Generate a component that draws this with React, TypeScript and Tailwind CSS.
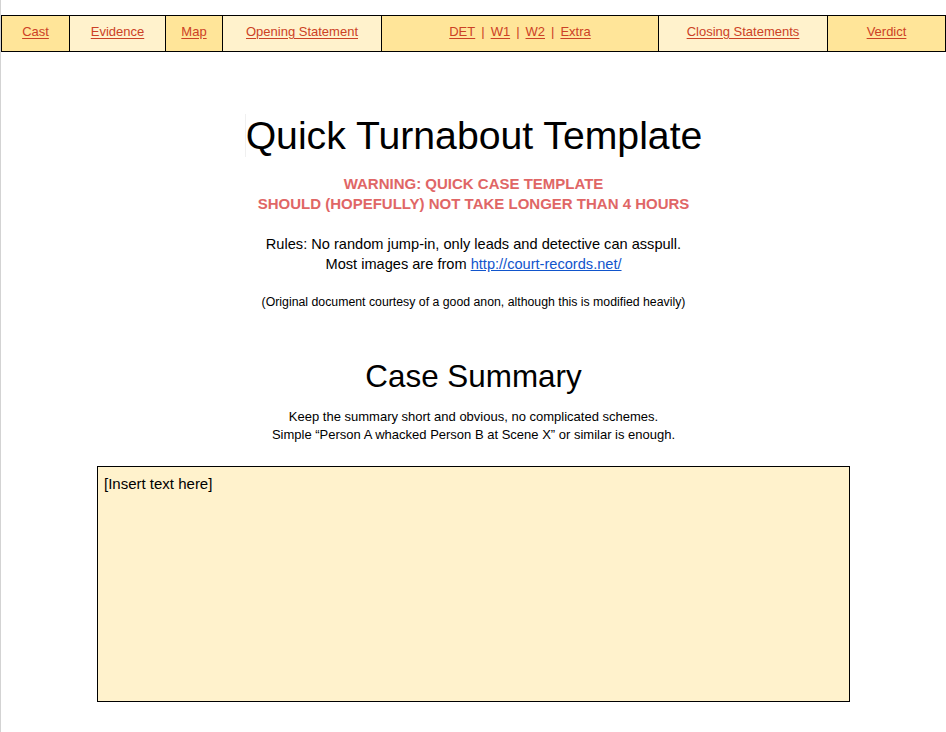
const navCells = [
  { label: "Cast", width: "w-[68px]", bg: "bg-[#ffe599]" },
  { label: "Evidence", width: "w-[96px]", bg: "bg-[#fff2cc]" },
  { label: "Map", width: "w-[57px]", bg: "bg-[#ffe599]" },
  { label: "Opening Statement", width: "w-[159px]", bg: "bg-[#fff2cc]" },
]

const navTail = [
  { label: "Closing Statements", width: "w-[169px]", bg: "bg-[#fff2cc]" },
  { label: "Verdict", width: "flex-1", bg: "bg-[#ffe599]" },
]

function NavLink({ children }: { children: string }) {
  return (
    <a href="#" className="text-[#cc4125] underline underline-offset-2">
      {children}
    </a>
  )
}

function Sep() {
  return <span className="mx-[6px] text-[#cc4125]">|</span>
}

export default function App() {
  return (
    <div className="min-h-[732px] w-full border-l border-[#d3d3d3] bg-white font-['Liberation_Sans',Arial,sans-serif] text-black">
      <div className="pt-[15px]">
        <div className="flex h-[37px] border border-black text-[13px]">
          {navCells.map((c) => (
            <div
              key={c.label}
              className={`${c.width} ${c.bg} flex shrink-0 items-center justify-center border-r border-black pb-[4px]`}
            >
              <NavLink>{c.label}</NavLink>
            </div>
          ))}
          <div className="flex w-[277px] shrink-0 items-center justify-center border-r border-black bg-[#ffe599] pb-[4px]">
            <NavLink>DET</NavLink>
            <Sep />
            <NavLink>W1</NavLink>
            <Sep />
            <NavLink>W2</NavLink>
            <Sep />
            <NavLink>Extra</NavLink>
          </div>
          {navTail.map((c, i) => (
            <div
              key={c.label}
              className={`${c.width} ${c.bg} flex shrink-0 items-center justify-center pb-[4px] ${
                i === 0 ? "border-r border-black" : ""
              }`}
            >
              <NavLink>{c.label}</NavLink>
            </div>
          ))}
        </div>
      </div>

      <div className="flex flex-col items-center text-center">
        <h1 className="mt-[62px] text-[39.2px] leading-[44px] font-normal">
          <span className="border-l border-[#f0f0f0]">Quick Turnabout Template</span>
        </h1>

        <p className="mt-[16px] text-[15px] leading-[20px] font-bold text-[#e06666]">
          WARNING: QUICK CASE TEMPLATE
          <br />
          SHOULD (HOPEFULLY) NOT TAKE LONGER THAN 4 HOURS
        </p>

        <p className="mt-[20px] text-[14.6px] leading-[20px]">
          Rules: No random jump-in, only leads and detective can asspull.
          <br />
          Most images are from{" "}
          <a href="#" className="text-[#1155cc] underline">
            http://court-records.net/
          </a>
        </p>

        <p className="mt-[20px] text-[12.3px] leading-[16px]">
          (Original document courtesy of a good anon, although this is modified heavily)
        </p>

        <h2 className="mt-[49px] text-[31.4px] leading-[36px] font-normal">Case Summary</h2>

        <p className="mt-[13px] text-[13px] leading-[17.5px]">
          Keep the summary short and obvious, no complicated schemes.
          <br />
          Simple “Person A whacked Person B at Scene X” or similar is enough.
        </p>

        <div className="mt-[23px] h-[236px] w-[753px] border border-black bg-[#fff2cc] px-[6px] pt-[7px] text-left text-[15px] leading-[20px]">
          [Insert text here]
        </div>
      </div>
    </div>
  )
}
